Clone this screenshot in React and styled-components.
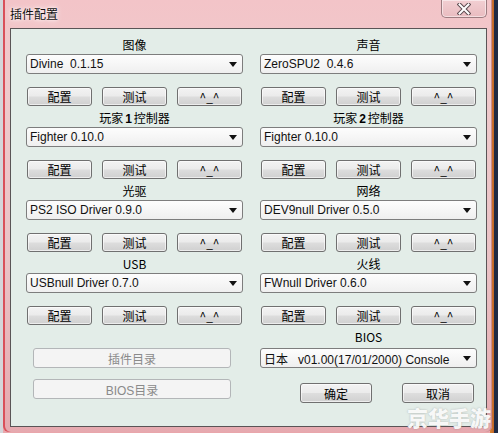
import React from 'react';
import styled, { createGlobalStyle } from 'styled-components';

const GlobalStyle = createGlobalStyle`
    html, body {
        margin: 0;
        padding: 0;
    }
    body {
        font-family: "Liberation Sans", "Noto Sans CJK SC", sans-serif;
        font-size: 12px;
    }
`;

const Desktop = styled.div`
    position: relative;
    width: 498px;
    height: 433px;
    overflow: hidden;
    display: flex;
    background: linear-gradient(90deg, #d4d6da 0px, #d4d6da 3px, #e9a6ab 3px, #e9a6ab 490px, #d9852f 490px, #c0642a 494px, #1f2a44 494px);
`;

const Window = styled.div`
    margin-left: 3px;
    width: 489px;
    height: 432px;
    display: flex;
    flex-direction: column;
    border-radius: 0 0 6px 6px;
    background: linear-gradient(180deg, #f3c4c8 0%, #efcacc 20%, #eac3c6 60%, #e6a9af 100%);
    box-shadow: inset 2px 0 0 #d9505a, inset -1px 0 0 #c98c92;
`;

const TitleBar = styled.div`
    height: 28px;
    display: flex;
    align-items: flex-start;
    justify-content: space-between;
    flex-shrink: 0;
`;

const Title = styled.span`
    margin: 6px 0 0 7px;
    font-family: "Noto Sans CJK SC", sans-serif;
    font-size: 12px;
    line-height: 16px;
    color: #111;
    text-shadow: 0 0 6px #fff, 0 0 3px #fff;
`;

const CloseButton = styled.div`
    margin-right: 5px;
    width: 46px;
    height: 18px;
    box-sizing: border-box;
    border: 1px solid #9c7c80;
    border-top: none;
    border-radius: 0 0 5px 5px;
    background: linear-gradient(180deg, #f2cfd2, #e9bcc0);
    box-shadow: inset 0 0 0 1px rgba(255, 255, 255, 0.5);
    display: flex;
    align-items: center;
    justify-content: center;
`;

const Client = styled.div`
    margin: 0 5px 5px 7px;
    flex: 1;
    border: 1px solid #5a5456;
    background: #e3ede8;
    padding: 8px 9px 0 15px;
    display: grid;
    grid-template-columns: 217px 217px;
    column-gap: 17px;
    row-gap: 4px;
    align-content: start;
`;

const Section = styled.div`
    display: flex;
    flex-direction: column;
`;

const Label = styled.div`
    height: 16px;
    line-height: 16px;
    text-align: center;
    font-family: "Noto Sans CJK SC", sans-serif;
    font-size: 12px;
    color: #000;

    b {
        font-family: "Liberation Sans", sans-serif;
        font-weight: bold;
        margin: 0 2px;
    }
`;

const Combo = styled.div`
    margin-top: ${p => p.$gap || 1}px;
    height: 20px;
    box-sizing: border-box;
    border: 1px solid #7d7d7d;
    border-radius: 3px;
    background: linear-gradient(180deg, #fdfdfd 0%, #f6f6f6 50%, #efefef 100%);
    display: flex;
    align-items: center;
    justify-content: space-between;
    padding: 0 5px 0 3px;
    font-family: "Liberation Sans", "Noto Sans CJK SC", sans-serif;
    font-size: 12px;
    color: #111;
    white-space: pre;
`;

const ButtonRow = styled.div`
    margin-top: 13px;
    padding: 0 1px;
    display: grid;
    grid-template-columns: repeat(3, 1fr);
    column-gap: 10px;
`;

const Button = styled.div`
    height: ${p => p.$h || 19}px;
    width: ${p => (p.$w ? `${p.$w}px` : 'auto')};
    box-sizing: border-box;
    border: 1px solid #707070;
    border-radius: 3px;
    background: linear-gradient(180deg, #f3f3f3 0%, #ebebeb 48%, #dddddd 52%, #d0d0d0 100%);
    box-shadow: inset 0 0 0 1px rgba(255, 255, 255, 0.6);
    display: flex;
    align-items: center;
    justify-content: center;
    font-family: "Noto Sans CJK SC", sans-serif;
    font-size: 12px;
    color: #000;
`;

const DisabledButton = styled.div`
    margin: ${p => p.$top}px 12px 0 7px;
    height: 20px;
    box-sizing: border-box;
    border: 1px solid #b3b6b8;
    border-radius: 3px;
    background: #f4f4f4;
    display: flex;
    align-items: center;
    justify-content: center;
    font-family: "Liberation Sans", "Noto Sans CJK SC", sans-serif;
    font-size: 12px;
    color: #8a8a8a;
`;

const DialogButtons = styled.div`
    margin-top: 15px;
    padding-right: 3px;
    display: flex;
    justify-content: flex-end;
    gap: 30px;
`;

// site watermark stamped over the corner of the screenshot
const Watermark = styled.div`
    position: absolute;
    right: 7px;
    bottom: 1px;
    font-family: "Noto Sans CJK SC", sans-serif;
    font-size: 21px;
    font-weight: 900;
    color: rgba(255, 255, 255, 0.93);
    text-shadow: 0 0 2px rgba(120, 120, 120, 0.5);
`;

const Arrow = () => (
    <svg width="8" height="5" viewBox="0 0 8 5">
        <path d="M0 0 H8 L4 5 Z" fill="#111" />
    </svg>
);

const CloseGlyph = () => (
    <svg width="14" height="12" viewBox="0 0 14 12">
        <path d="M2.5 1.5 L11.5 10.5 M11.5 1.5 L2.5 10.5" stroke="#5b4a4e" strokeWidth="4" strokeLinecap="square" />
        <path d="M2.5 1.5 L11.5 10.5 M11.5 1.5 L2.5 10.5" stroke="#ffffff" strokeWidth="2" strokeLinecap="square" />
    </svg>
);

const plugins = [
    { label: '图像', value: 'Divine  0.1.15' },
    { label: '声音', value: 'ZeroSPU2  0.4.6' },
    { label: <>玩家<b>1</b>控制器</>, value: 'Fighter 0.10.0' },
    { label: <>玩家<b>2</b>控制器</>, value: 'Fighter 0.10.0' },
    { label: '光驱', value: 'PS2 ISO Driver 0.9.0' },
    { label: '网络', value: 'DEV9null Driver 0.5.0' },
    { label: 'USB', value: 'USBnull Driver 0.7.0' },
    { label: '火线', value: 'FWnull Driver 0.6.0' },
];

const PluginSection = ({ label, value }) => (
    <Section>
        <Label>{label}</Label>
        <Combo>
            <span>{value}</span>
            <Arrow />
        </Combo>
        <ButtonRow>
            <Button>配置</Button>
            <Button>测试</Button>
            <Button>^_^</Button>
        </ButtonRow>
    </Section>
);

const App = () => {
    return (
        <Desktop>
            <GlobalStyle />
            <Window>
                <TitleBar>
                    <Title>插件配置</Title>
                    <CloseButton>
                        <CloseGlyph />
                    </CloseButton>
                </TitleBar>
                <Client>
                    {plugins.map((p, i) => (
                        <PluginSection key={i} label={p.label} value={p.value} />
                    ))}
                    <Section>
                        <DisabledButton $top={19}>插件目录</DisabledButton>
                        <DisabledButton $top={11}>BIOS目录</DisabledButton>
                    </Section>
                    <Section>
                        <Label>BIOS</Label>
                        <Combo $gap={3}>
                            <span>日本   v01.00(17/01/2000) Console</span>
                            <Arrow />
                        </Combo>
                        <DialogButtons>
                            <Button $w={72} $h={20}>确定</Button>
                            <Button $w={72} $h={20}>取消</Button>
                        </DialogButtons>
                    </Section>
                </Client>
            </Window>
            <Watermark>京华手游</Watermark>
        </Desktop>
    );
};

export default App;
